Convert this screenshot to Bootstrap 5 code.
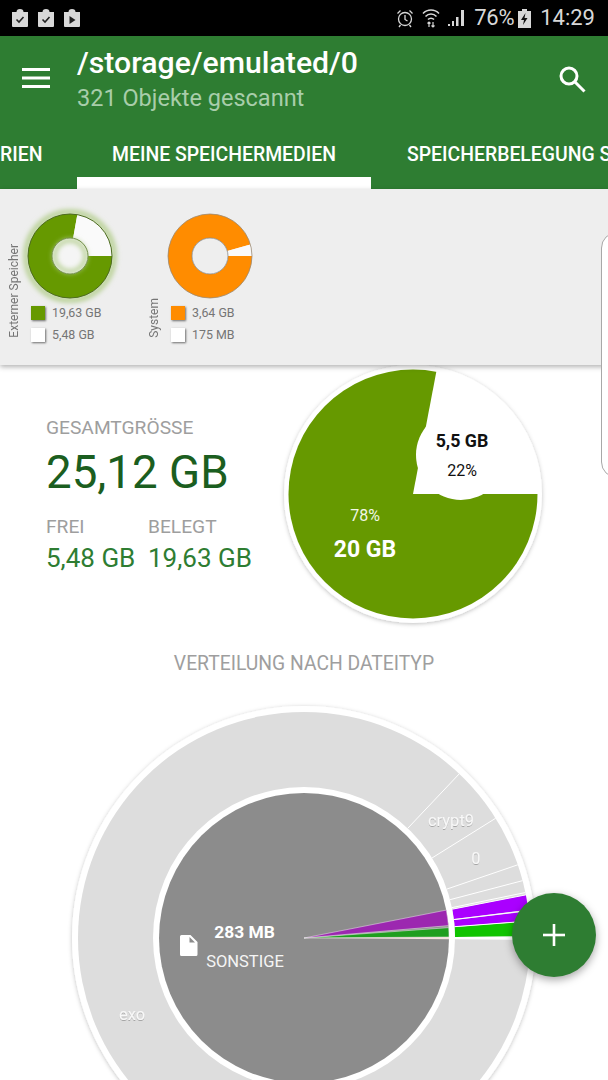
<!DOCTYPE html>
<html lang="de">
<head>
    <meta charset="UTF-8">
    <meta name="viewport" content="width=device-width, initial-scale=1.0">
    <title>Speicher</title>
    <link href="https://cdn.jsdelivr.net/npm/bootstrap@5.3.0/dist/css/bootstrap.min.css" rel="stylesheet">
    <style>
        html, body { height: 1080px; overflow: hidden; }
        body { font-family: Roboto, "Liberation Sans", sans-serif; background: #fff; }
        .screen { width: 608px; height: 1080px; overflow: hidden; }

        .status-bar { height: 36px; background: #000; color: #d8d8d8; padding: 0 13px 0 11px; }
        .status-text { font-size: 22px; line-height: 36px; }
        .status-pct { font-size: 22px; letter-spacing: -.3px; margin-left: 8px; }
        .status-time { font-size: 22px; margin-left: 9px; }

        .app-bar { background: #2e7d32; color: #fff; height: 153px; }
        .app-top { height: 83px; padding: 9px 22px 0 22px; }
        .menu-icon { margin: 23px 27px 0 0; }
        .search-icon { margin: 20px 0 0 auto; }
        .app-title { font-size: 30.2px; line-height: 36px; font-weight: 500; }
        .app-sub { font-size: 23.5px; line-height: 34px; color: #a8cdaa; }
        .tab-link { color: #fff; font-size: 19.4px; font-weight: 500; line-height: 24px; white-space: nowrap;
            padding: 24px 36px 10px; border-bottom: 12px solid transparent; text-align: center; }
        .tab-link:hover { color: #fff; }
        .tab-first { width: 77px; padding: 24px 36px 10px 0; text-align: right; }
        .tab-active { width: 294px; padding-left: 0; padding-right: 0; border-bottom-color: #fff; }

        .devices { height: 176px; background: #eee; padding-top: 20px; box-shadow: 0 2px 5px rgba(0,0,0,.3); position: relative; }
        .device { width: 140px; height: 137px; padding-left: 8px; }
        .device-name { writing-mode: vertical-rl; transform: rotate(180deg); font-size: 12px; line-height: 12px; color: #757575; width: 12px; margin-bottom: 8px; }
        .device-body { width: 100px; }
        .legend-row { height: 22px; padding-left: 11px; font-size: 12.4px; color: #757575; }
        .swatch { width: 14px; height: 14px; margin-right: 7px; box-shadow: 1px 1px 2px rgba(0,0,0,.55); }

        .summary { height: 258px; }
        .summary-text { width: 284px; padding: 51px 0 0 46px; }
        .stat-label { font-size: 19.2px; line-height: 24px; color: #9e9e9e; }
        .stat-total { font-size: 45.7px; line-height: 54px; margin-top: 6px; color: #1b5e20; }
        .stat-pair { margin-top: 15px; }
        .stat-free { width: 102px; }
        .stat-value { font-size: 26px; line-height: 34px; margin-top: 2px; color: #2e7d32; }
        .svg-over { overflow: visible; display: block; }

        .section-title { font-size: 19.3px; line-height: 24px; margin-top: 29px; color: #9e9e9e; }
        .types { margin-top: 24px; }

        .edge-sheet { position: absolute; left: 601px; top: 232px; width: 20px; height: 246px; background: #fff;
            border: 1px solid #a8a8a8; border-radius: 16px 0 0 16px; }
        .fab { position: absolute; left: 512px; top: 893px; width: 84px; height: 84px; padding: 0; background: #2e7d32; border: 0;
            box-shadow: 0 3px 8px rgba(0,0,0,.35); }
    </style>
</head>
<body>
    <div class="screen position-relative">
        <!-- Status bar -->
        <div class="status-bar d-flex align-items-center">
            <svg width="18" height="18" viewBox="0 0 18 18" class="me-2"><path fill="#d8d8d8" d="M1 3h4.500a3.500 3 0 0 1 7 0H17v14a1 1 0 0 1-1 1H2a1 1 0 0 1-1-1z"/><path fill="none" stroke="#222" stroke-width="1.600" d="M5.500 10.500l2.500 2.500 4.500-5"/></svg>
            <svg width="18" height="18" viewBox="0 0 18 18" class="me-2"><path fill="#d8d8d8" d="M1 3h4.500a3.500 3 0 0 1 7 0H17v14a1 1 0 0 1-1 1H2a1 1 0 0 1-1-1z"/><path fill="none" stroke="#222" stroke-width="1.600" d="M5.500 10.500l2.500 2.500 4.500-5"/></svg>
            <svg width="18" height="18" viewBox="0 0 18 18"><path fill="#d8d8d8" d="M1 3h4.500a3.500 3 0 0 1 7 0H17v14a1 1 0 0 1-1 1H2a1 1 0 0 1-1-1z"/><path fill="#222" d="M6.500 7l6 4-6 4z"/></svg>
            <svg class="ms-auto" width="18" height="20" viewBox="0 0 18 20" fill="none" stroke="#d8d8d8" stroke-width="1.300"><circle cx="9" cy="11" r="6.500"/><path d="M9 7v4.500l2.500 1.500M1.500 5.500l3-3M16.500 5.500l-3-3M4.500 17l-1.500 2M13.500 17l1.500 2"/></svg>
            <svg class="ms-2" width="18" height="20" viewBox="0 0 18 20" fill="none" stroke="#d8d8d8" stroke-width="1.500"><path d="M1 5.500a11 11 0 0 1 16 0M3.500 8.500a7.500 7.500 0 0 1 11 0M6 11.500a4 4 0 0 1 6 0"/><path stroke-width="1.200" d="M7 14v5M11 14v5M5.500 15.500L7 14l1.500 1.500M9.500 17.500L11 19l1.500-1.500"/></svg>
            <svg class="ms-2" width="18" height="18" viewBox="0 0 18 18" fill="#d8d8d8"><rect x="0" y="15" width="2" height="2"/><rect x="4" y="12" width="2" height="5"/><rect x="8" y="8" width="2.500" height="9"/><path d="M13 1h3v16h-3z"/></svg>
            <span class="status-text status-pct">76%</span>
            <svg class="ms-1" width="13" height="19" viewBox="0 0 13 19"><path fill="#d8d8d8" d="M4 0h5v2h4v17H0V2h4z"/><path fill="#111" d="M7.500 4L3 11h3l-1 5 4.500-7h-3z"/></svg>
            <span class="status-text status-time">14:29</span>
        </div>

        <!-- App bar -->
        <div class="app-bar">
            <div class="app-top d-flex align-items-start">
                <svg class="menu-icon" width="28" height="20" viewBox="0 0 28 20" fill="#fff"><rect width="28" height="3"/><rect y="8.500" width="28" height="3"/><rect y="17" width="28" height="3"/></svg>
                <div>
                    <div class="app-title">/storage/emulated/0</div>
                    <div class="app-sub">321 Objekte gescannt</div>
                </div>
                <svg class="search-icon" width="28" height="28" viewBox="0 0 28 28" fill="none" stroke="#fff" stroke-width="3"><circle cx="11" cy="11" r="8"/><path d="M17 17l9.500 9.500"/></svg>
            </div>
            <ul class="nav flex-nowrap">
                <li class="nav-item"><a class="nav-link tab-link tab-first" href="#">RIEN</a></li>
                <li class="nav-item"><a class="nav-link tab-link tab-active" href="#">MEINE SPEICHERMEDIEN</a></li>
                <li class="nav-item"><a class="nav-link tab-link" href="#">SPEICHERBELEGUNG S</a></li>
            </ul>
        </div>

        <!-- Storage devices -->
        <div class="devices d-flex">
            <div class="device d-flex align-items-end">
                <div class="device-name">Externer Speicher</div>
                <div class="device-body">
                    <svg class="svg-over" width="100" height="93" viewBox="0 3 100 93" id="chartExternal"></svg>
                    <div class="legend-row d-flex align-items-center"><span class="swatch" style="background:#669900"></span>19,63 GB</div>
                    <div class="legend-row d-flex align-items-center"><span class="swatch" style="background:#fff"></span>5,48 GB</div>
                </div>
            </div>
            <div class="device d-flex align-items-end">
                <div class="device-name">System</div>
                <div class="device-body">
                    <svg class="svg-over" width="100" height="93" viewBox="0 3 100 93" id="chartSystem"></svg>
                    <div class="legend-row d-flex align-items-center"><span class="swatch" style="background:#ff8c00"></span>3,64 GB</div>
                    <div class="legend-row d-flex align-items-center"><span class="swatch" style="background:#fff"></span>175 MB</div>
                </div>
            </div>
        </div>

        <!-- Summary -->
        <div class="summary d-flex">
            <div class="summary-text">
                <div class="stat-label">GESAMTGRÖSSE</div>
                <div class="stat-total">25,12 GB</div>
                <div class="stat-pair d-flex">
                    <div class="stat-free">
                        <div class="stat-label">FREI</div>
                        <div class="stat-value">5,48 GB</div>
                    </div>
                    <div>
                        <div class="stat-label">BELEGT</div>
                        <div class="stat-value">19,63 GB</div>
                    </div>
                </div>
            </div>
            <svg class="svg-over" width="258" height="258" viewBox="284 365 258 258" id="chartUsage"></svg>
        </div>

        <div class="section-title text-center">VERTEILUNG NACH DATEITYP</div>
        <div class="types">
            <svg class="d-block" width="608" height="380" viewBox="0 700 608 380" id="chartTypes"></svg>
        </div>

        <div class="edge-sheet"></div>
        <button class="btn rounded-circle fab d-flex align-items-center justify-content-center" type="button">
            <svg width="24" height="24" viewBox="0 0 24 24" fill="#fff"><rect x="10.700" y="1" width="2.600" height="22"/><rect x="1" y="10.700" width="22" height="2.600"/></svg>
        </button>
    </div>

    <script src="https://cdn.jsdelivr.net/npm/bootstrap@5.3.0/dist/js/bootstrap.bundle.min.js"></script>
    <script>
        // Ring or pie slice, angles in degrees counter-clockwise from east
        function wedge(cx, cy, r0, r1, a0, a1) {
            const p = (r, a) => {
                const t = a * Math.PI / 180;
                return (cx + r * Math.cos(t)).toFixed(2) + ' ' + (cy - r * Math.sin(t)).toFixed(2);
            };
            const large = a1 - a0 > 180 ? 1 : 0;
            let d = 'M' + p(r1, a0) + 'A' + r1 + ' ' + r1 + ' 0 ' + large + ' 0 ' + p(r1, a1);
            if (r0 > 0) d += 'L' + p(r0, a1) + 'A' + r0 + ' ' + r0 + ' 0 ' + large + ' 1 ' + p(r0, a0) + 'Z';
            else d += 'L' + cx + ' ' + cy + 'Z';
            return d;
        }

        function spoke(cx, cy, r0, r1, a) {
            const t = a * Math.PI / 180;
            return `<line x1="${cx + r0 * Math.cos(t)}" y1="${cy - r0 * Math.sin(t)}" x2="${cx + r1 * Math.cos(t)}" y2="${cy - r1 * Math.sin(t)}" stroke="#fff" stroke-width="1"/>`;
        }

        const defs = `<defs><filter id="soft" x="-30%" y="-30%" width="160%" height="160%"><feGaussianBlur stdDeviation="2.500"/></filter>
            <filter id="lift" x="-10%" y="-10%" width="120%" height="120%"><feDropShadow dx="0" dy="1" stdDeviation="2" flood-color="#000" flood-opacity=".25"/></filter>
            <filter id="textLift" x="-20%" y="-40%" width="140%" height="180%"><feDropShadow dx="0" dy="1" stdDeviation=".6" flood-color="#000" flood-opacity=".25"/></filter></defs>`;

        // Small device charts
        document.getElementById('chartExternal').innerHTML = defs + `
            <circle cx="50" cy="50" r="44" fill="none" stroke="#b5cf90" stroke-width="5" filter="url(#soft)"/>
            <path d="${wedge(50, 50, 18, 42, 80, 360)}" fill="#669900"/>
            <path d="${wedge(50, 50, 18, 42, 0, 80)}" fill="#fafafa"/>
            <circle cx="50" cy="50" r="42" fill="none" stroke="#4c6b1f" stroke-width="1"/>
            <circle cx="50" cy="50" r="18" fill="#f5f5f5" stroke="#4c6b1f" stroke-width="1"/>
            <circle cx="50" cy="50" r="15.500" fill="none" stroke="#b5cf90" stroke-width="4" filter="url(#soft)"/>`;
        document.getElementById('chartSystem').innerHTML = defs + `
            <path d="${wedge(50, 50, 18, 42, 16, 360)}" fill="#ff8c00"/>
            <path d="${wedge(50, 50, 18, 42, 0, 16)}" fill="#fafafa"/>
            <circle cx="50" cy="50" r="42" fill="none" stroke="#9a8a75" stroke-width=".8"/>
            <circle cx="50" cy="50" r="18" fill="#eee" stroke="#8a8a8a" stroke-width=".8"/>`;

        // Usage pie
        document.getElementById('chartUsage').innerHTML = defs + `
            <circle cx="413" cy="494" r="129" fill="#fff" filter="url(#lift)"/>
            <circle cx="413" cy="494" r="124.500" fill="#669900"/>
            <path d="${wedge(413, 494, 0, 125.5, 0, 79.2)}" fill="#fff"/>
            <circle cx="461" cy="455" r="45" fill="#fff"/>
            <text x="462" y="447" text-anchor="middle" font-size="17.800" font-weight="700" fill="#111">5,5 GB</text>
            <text x="462" y="476" text-anchor="middle" font-size="16" fill="#111">22%</text>
            <text x="365" y="521" text-anchor="middle" font-size="16" fill="#f2f7e6">78%</text>
            <text x="365" y="557" text-anchor="middle" font-size="23" font-weight="700" fill="#fff">20 GB</text>`;

        // File type rings
        const cx = 304, cy = 938;
        let types = defs + `<circle cx="${cx}" cy="${cy}" r="232" fill="#fff" filter="url(#lift)"/>
            <circle cx="${cx}" cy="${cy}" r="226" fill="#ddd"/>`;
        types += `<path d="${wedge(cx, cy, 151, 226, 7.2, 11)}" fill="#aa00ff"/>`;
        types += `<path d="${wedge(cx, cy, 151, 226, 4.4, 6.8)}" fill="#aa00ff"/>`;
        types += `<path d="${wedge(cx, cy, 151, 226, 0.4, 4.2)}" fill="#10c400"/>`;
        types += `<path d="${wedge(cx, cy, 151, 226, -0.5, 0.4)}" fill="#fff"/>`;
        [46.6, 32, 18.9, 14.7, 11.6, 11, 7, 4.3].forEach(a => { types += spoke(cx, cy, 151, 226, a); });
        types += `<circle cx="${cx}" cy="${cy}" r="151" fill="#fff"/>
            <circle cx="${cx}" cy="${cy}" r="145" fill="#8c8c8c"/>
            <path d="${wedge(cx, cy, 0, 145, 0.4, 4.1)}" fill="#1f9e1f" stroke="#eee" stroke-width=".5"/>
            <path d="${wedge(cx, cy, 0, 145, 4.9, 11.1)}" fill="#9c27b0" stroke="#eee" stroke-width=".5"/>
            <path d="${wedge(cx, cy, 0, 145, -0.5, 0.4)}" fill="#f3e3e0"/>
            <path fill="#fff" d="M181.500 935h9l7 7v12.500a1.500 1.500 0 0 1-1.500 1.500h-14.500a1.500 1.500 0 0 1-1.500-1.500v-18a1.500 1.500 0 0 1 1.500-1.500z"/>
            <path fill="#8c8c8c" d="M189.500 937v5.500h5.500z"/>
            <text x="244.500" y="938" text-anchor="middle" font-size="17.400" font-weight="700" fill="#fff">283 MB</text>
            <text x="245" y="967" text-anchor="middle" font-size="16.500" fill="#f5f5f5">SONSTIGE</text>
            <g font-size="16.500" fill="#f8f8f8" text-anchor="middle" filter="url(#textLift)">
                <text x="132" y="1020">exo</text>
                <text x="451" y="826">crypt9</text>
                <text x="476" y="864">0</text>
            </g>`;
        document.getElementById('chartTypes').innerHTML = types;
    </script>
</body>
</html>
